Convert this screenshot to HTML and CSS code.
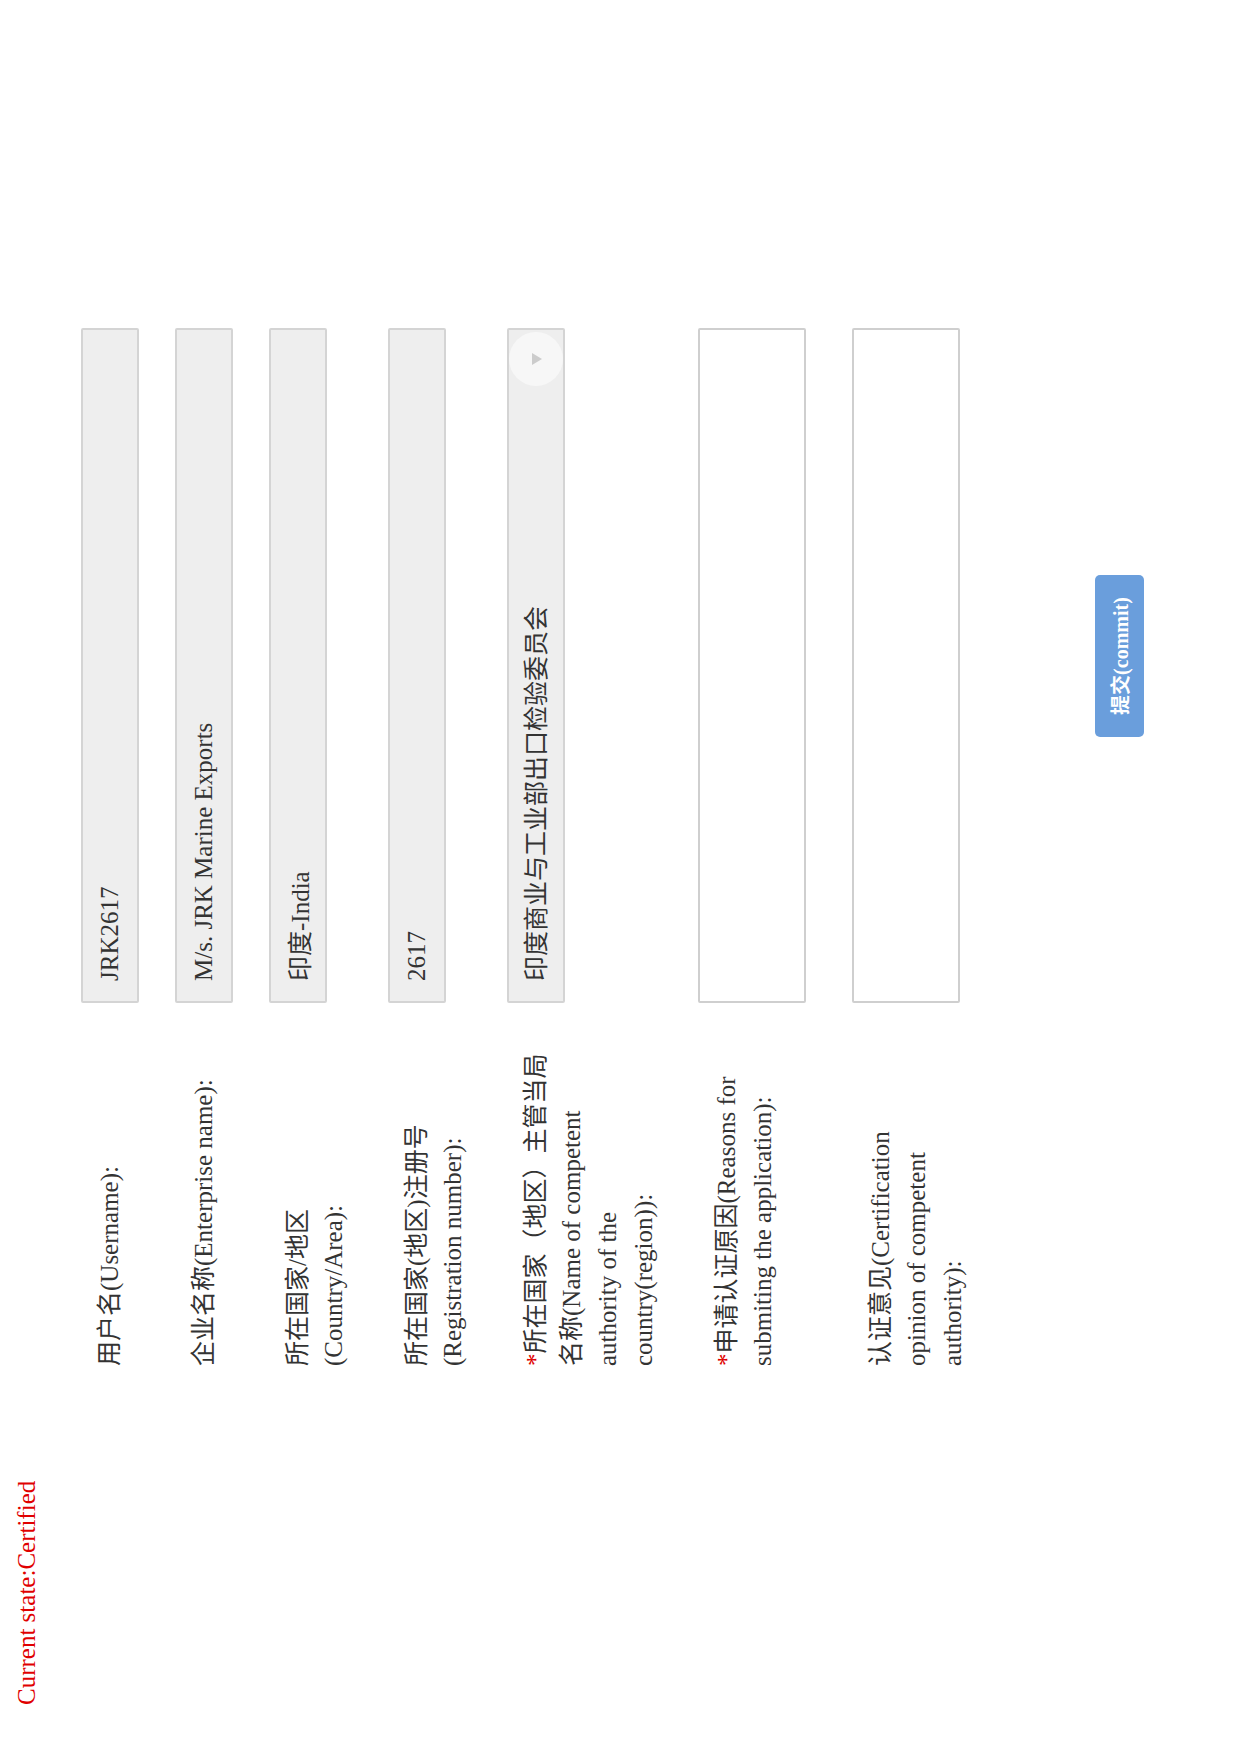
FILE: index.html
```html
<!DOCTYPE html>
<html lang="zh-CN">
<head>
  <meta charset="UTF-8">
  <title>Certification</title>
  <link rel="stylesheet" href="styles.css">
</head>
<body>
  <!-- the whole sheet is printed sideways -->
  <div class="page">

    <div class="status">Current state:Certified</div>

    <div class="form">
      <label class="label">用户名(Username):</label>
      <input class="field" type="text" value="JRK2617" readonly>

      <label class="label">企业名称(Enterprise name):</label>
      <input class="field" type="text" value="M/s. JRK Marine Exports" readonly>

      <label class="label">所在国家/地区(Country/Area):</label>
      <input class="field" type="text" value="印度-India" readonly>

      <label class="label">所在国家(地区)注册号(Registration number):</label>
      <input class="field" type="text" value="2617" readonly>

      <label class="label"><span class="req">*</span>所在国家（地区）主管当局名称(Name of competent authority of the country(region)):</label>
      <div class="select-wrap">
        <select class="field select" disabled>
          <option>印度商业与工业部出口检验委员会</option>
        </select>
        <span class="select-arrow"></span>
      </div>

      <label class="label"><span class="req">*</span>申请认证原因(Reasons for submiting the application):</label>
      <textarea class="area"></textarea>

      <label class="label">认证意见(Certification opinion of competent authority):</label>
      <textarea class="area"></textarea>

      <div class="actions">
        <button class="commit-btn">提交(commit)</button>
      </div>
    </div>

  </div>
</body>
</html>
```

FILE: styles.css
```css
  html, body {
    margin: 0; padding: 0;
    overflow: hidden;
    background-color: #fff;
  }
  body {
    width: 1240px;
    height: 1754px;
    font-family: "Liberation Serif", "Noto Sans CJK SC", serif;
    color: #333;
  }

  /* sheet is laid out landscape then turned a quarter left */
  .page {
    box-sizing: border-box;
    width: 1754px;
    height: 1240px;
    padding-top: 13px;
    transform-origin: top left;
    transform: translate(0, 1754px) rotate(-90deg);
  }

  .status {
    padding-left: 49px;
    font-size: 25px;
    color: #e00000;
  }

  .form {
    display: grid;
    grid-template-columns: 316px 675px;
    column-gap: 47px;
    row-gap: 36px;
    align-items: start;
    margin-top: 40px;
    padding-left: 388px;
  }

  .label {
    padding-top: 11px;
    font-size: 25px;
    line-height: 36px;
  }
  .req {
    color: #e00000;
  }

  .field {
    box-sizing: border-box;
    width: 675px;
    height: 58px;
    margin: 0;
    padding: 0 20px;
    background-color: #eee;
    border: 2px solid #d4d4d4;
    border-radius: 2px;
    font-family: "Liberation Serif", "Noto Sans CJK SC", serif;
    font-size: 25px;
    color: #333;
    outline: none;
  }

  .select-wrap {
    position: relative;
  }
  .select {
    appearance: none;
    -webkit-appearance: none;
    opacity: 1;
  }
  .select-arrow {
    position: absolute;
    top: 2px;
    right: 4px;
    width: 54px;
    height: 54px;
    border-radius: 50%;
    background-color: #f7f7f7;
  }
  .select-arrow::after {
    content: "";
    position: absolute;
    left: 21px;
    top: 23px;
    border-left: 6px solid transparent;
    border-right: 6px solid transparent;
    border-top: 10px solid #ccc;
  }

  .area {
    box-sizing: border-box;
    width: 675px;
    height: 108px;
    margin: 0 0 10px 0;
    padding: 8px 20px;
    border: 2px solid #cfcfcf;
    border-radius: 2px;
    resize: none;
    font-family: "Liberation Serif", "Noto Sans CJK SC", serif;
    font-size: 20px;
  }

  .actions {
    grid-column: 2;
    margin-top: 88px;
    padding-left: 266px;
  }
  .commit-btn {
    width: 162px;
    height: 49px;
    padding: 0;
    background-color: #6a9edc;
    color: #fff;
    border: none;
    border-radius: 5px;
    font-family: "Liberation Serif", "Noto Sans CJK SC", serif;
    font-size: 20px;
    font-weight: bold;
    cursor: pointer;
  }
```
